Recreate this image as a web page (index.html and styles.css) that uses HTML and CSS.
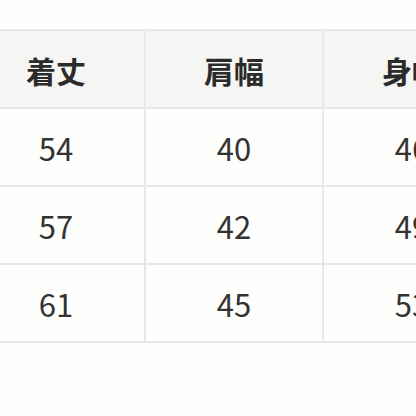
FILE: index.html
```html
<!DOCTYPE html>
<html lang="ja">
<head>
<meta charset="utf-8">
<link rel="stylesheet" href="styles.css">
</head>
<body>
<div class="wrap">
<table class="size">
<thead>
<tr><th>着丈</th><th>肩幅</th><th>身幅</th></tr>
</thead>
<tbody>
<tr><td>54</td><td>40</td><td>46</td></tr>
<tr><td>57</td><td>42</td><td>49</td></tr>
<tr><td>61</td><td>45</td><td>53</td></tr>
</tbody>
</table>
</div>
</body>
</html>
```
FILE: styles.css
```css
html, body {
  margin: 0;
  padding: 0;
  background: #fefefd;
  width: 416px;
  height: 416px;
  overflow: hidden;
}
.wrap {
  padding-top: 29px;
  margin-left: -34px;
}
.size {
  border-collapse: collapse;
  table-layout: fixed;
  width: 536px;
  font-family: "Noto Sans CJK JP", "Noto Sans", sans-serif;
  color: #333333;
}
.size th, .size td {
  width: 178px;
  border: 2px solid #e8e8e6;
  text-align: center;
  padding: 0;
  height: 78px;
  box-sizing: border-box;
}
.size th {
  background: #f5f5f4;
  font-weight: 700;
  font-size: 30px;
  color: #2b2b2b;
  padding-top: 1px;
}
.size td {
  font-size: 31px;
  font-weight: 400;
  padding-top: 0;
}
```
